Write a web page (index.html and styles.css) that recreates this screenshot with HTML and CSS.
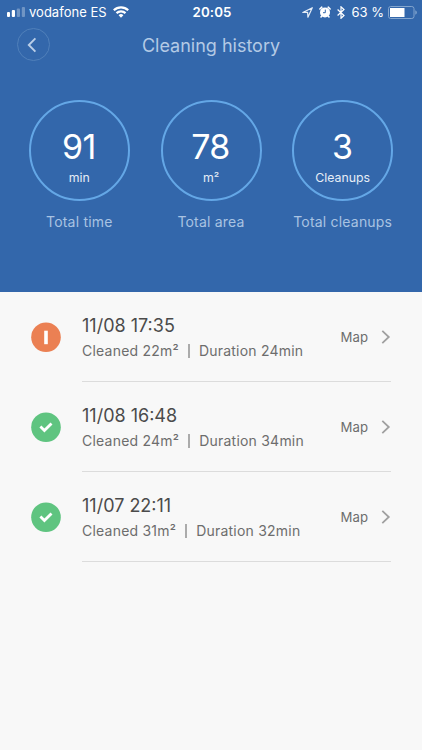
FILE: index.html
```html
<!DOCTYPE html>
<html lang="en">
<head>
<meta charset="utf-8">
<title>Cleaning history</title>
<link rel="stylesheet" href="styles.css">
</head>
<body>
<header class="hero">
  <div class="status">
    <div class="status-left">
      <svg class="signal" width="18" height="10" viewBox="0 0 18 10" fill="#fff"><rect x="0" y="5" width="3" height="5" rx="1"/><rect x="4.8" y="3" width="3.2" height="7" rx="1"/><rect x="9.8" y="1.5" width="3.2" height="8.5" rx="1" opacity=".3"/><rect x="14.8" y="0" width="3.2" height="10" rx="1" opacity=".3"/></svg>
      <span class="carrier">vodafone ES</span>
      <svg class="wifi" width="16" height="12" viewBox="0 0 16 12" fill="none" stroke="#fff" stroke-width="2.2"><path d="M.8 4.3a10.3 10.3 0 0 1 14.4 0"/><path d="M3.5 7.1a6.5 6.5 0 0 1 9 0"/><path d="M8 11.7 5.6 9.2a3.5 3.5 0 0 1 4.8 0Z" fill="#fff" stroke="none"/></svg>
    </div>
    <span class="clock">20:05</span>
    <div class="status-right">
      <svg class="locate" width="11" height="11" viewBox="0 0 11 11" fill="none" stroke="#e4ecf6" stroke-width="1.2" stroke-linejoin="round"><path d="M10.3.7.8 5.5l4.8-.2.3 4.9Z"/></svg>
      <svg class="alarm" width="12" height="12" viewBox="0 0 12 12"><circle cx="6" cy="6.4" r="5" fill="#fff"/><path d="M.9 3 2.8 1.2M11.1 3 9.2 1.2M2.8 10l-.8 1M9.2 10l.8 1" stroke="#fff" stroke-width="1.6" stroke-linecap="round"/><path d="M6.3 3.6v3.1H4" fill="none" stroke="#3367ab"/></svg>
      <svg class="bluetooth" width="8" height="13" viewBox="0 0 8 13" fill="none" stroke="#fff" stroke-width="1.2"><path d="m.6 3.5 6.4 6-3 2.8V.8l3 2.7-6.4 6"/></svg>
      <span class="percent">63 %</span>
      <svg class="battery" width="29" height="13" viewBox="0 0 29 13"><rect x=".5" y=".5" width="25.5" height="12" rx="2.2" fill="none" stroke="#83a5ce"/><rect x="2" y="2" width="14.5" height="9" fill="#fff"/><path d="M27.3 4.3c2 .8 2 3.6 0 4.4Z" fill="#83a5ce"/></svg>
    </div>
  </div>
  <nav class="nav">
    <span class="back"><svg width="10" height="16" viewBox="0 0 10 16" fill="none" stroke="#bacee7" stroke-width="1.9"><path d="M8.4 1.4 1.8 8l6.6 6.6"/></svg></span>
    <h1 class="title">Cleaning history</h1>
  </nav>
  <section class="totals">
    <div class="total"><div class="ring"><b>91</b><small>min</small></div><p>Total time</p></div>
    <div class="total"><div class="ring"><b>78</b><small>m²</small></div><p>Total area</p></div>
    <div class="total"><div class="ring"><b>3</b><small>Cleanups</small></div><p>Total cleanups</p></div>
  </section>
</header>
<main class="history">
  <article class="run">
    <svg class="badge" width="30" height="30" viewBox="0 0 30 30"><circle cx="15" cy="15.2" r="14.8" fill="#eb8053"/><rect x="13.2" y="8.7" width="3.6" height="13.5" fill="#fff"/></svg>
    <div class="body"><div class="info"><h2>11/08 17:35</h2><p>Cleaned 22m²<i></i>Duration 24min</p></div><span class="map">Map</span><svg class="chev" width="10" height="14" viewBox="0 0 10 14"><path d="m1.3.8 6.5 6.2-6.5 6.2"/></svg></div>
  </article>
  <article class="run">
    <svg class="badge" width="30" height="30" viewBox="0 0 30 30"><circle cx="15" cy="15.2" r="14.8" fill="#5fc480"/><path d="m9.4 14.6 4 3.9 7.1-7.1" fill="none" stroke="#fff" stroke-width="2.8"/></svg>
    <div class="body"><div class="info"><h2>11/08 16:48</h2><p>Cleaned 24m²<i></i>Duration 34min</p></div><span class="map">Map</span><svg class="chev" width="10" height="14" viewBox="0 0 10 14"><path d="m1.3.8 6.5 6.2-6.5 6.2"/></svg></div>
  </article>
  <article class="run">
    <svg class="badge" width="30" height="30" viewBox="0 0 30 30"><circle cx="15" cy="15.2" r="14.8" fill="#5fc480"/><path d="m9.4 14.6 4 3.9 7.1-7.1" fill="none" stroke="#fff" stroke-width="2.8"/></svg>
    <div class="body"><div class="info"><h2>11/07 22:11</h2><p>Cleaned 31m²<i></i>Duration 32min</p></div><span class="map">Map</span><svg class="chev" width="10" height="14" viewBox="0 0 10 14"><path d="m1.3.8 6.5 6.2-6.5 6.2"/></svg></div>
  </article>
</main>
</body>
</html>
```
FILE: styles.css
```css
* { box-sizing: border-box; margin: 0; padding: 0; }
body {
  width: 422px;
  height: 750px;
  overflow: hidden;
  background: #f8f8f8;
  font-family: Inter, "Liberation Sans", sans-serif;
}
svg { display: block; flex: none; }
.hero { height: 292px; background: #3367ab; color: #fff; }

.status {
  display: grid;
  grid-template-columns: 1fr auto 1fr;
  align-items: center;
  height: 24px;
  padding: 0 5px 0 7px;
  font-size: 13px;
  line-height: 24px;
  white-space: nowrap;
}
.status-left, .status-right { display: flex; align-items: center; }
.status-right { justify-content: flex-end; }
.carrier { margin: 0 6px 0 4px; letter-spacing: .02px; }
.clock { font-size: 13.3px; font-weight: 600; letter-spacing: .1px; }
.alarm { margin-left: 6px; }
.bluetooth { margin-left: 6px; }
.percent { margin: 0 4px 0 6px; letter-spacing: 0; }

.nav {
  display: grid;
  grid-template-columns: 33px 1fr 33px;
  align-items: center;
  height: 42px;
  padding: 0 17px;
}
.back {
  display: flex;
  align-items: center;
  justify-content: center;
  width: 33px;
  height: 33px;
  margin-bottom: 1px;
  padding-right: 3px;
  border: 1px solid #5080ba;
  border-radius: 50%;
}
.title {
  padding-top: 1px;
  color: #b4cae5;
  font-size: 18px;
  font-weight: 400;
  line-height: 24px;
  text-align: center;
}

.totals {
  display: grid;
  grid-template-columns: repeat(3, 131.7px);
  justify-content: center;
  padding-top: 34px;
}
.total { display: flex; flex-direction: column; align-items: center; }
.ring {
  display: flex;
  flex-direction: column;
  align-items: center;
  width: 101px;
  height: 101px;
  padding-top: 25px;
  border: 2.5px solid #64a7e6;
  border-radius: 50%;
}
.ring b { margin-left: -1px; font-size: 34px; font-weight: 400; letter-spacing: -.6px; line-height: 40px; }
.ring small { font-size: 12.3px; line-height: 16px; margin-top: 3px; color: #e6edf6; }
.total p {
  margin-top: 11px;
  color: #a9c3e2;
  font-size: 14px;
  letter-spacing: .2px;
  line-height: 20px;
  white-space: nowrap;
}

.run { display: flex; height: 90px; padding: 0 31px; }
.badge { margin: 30px 21px 0 0; }
.body {
  display: flex;
  flex: 1;
  border-bottom: 1px solid #dcdcdc;
  color: #6d6d6d;
}
.info { flex: 1; padding-top: 22px; white-space: nowrap; }
.info h2 { color: #4b4b4b; font-size: 18px; font-weight: 400; line-height: 24px; }
.info p { display: flex; align-items: center; font-size: 14px; letter-spacing: .22px; line-height: 20px; margin-top: 3px; }
.info i { width: 2px; height: 14px; margin: 0 9px; background: #ababab; }
.map { margin: 35px 13px 0 0; font-size: 13.2px; line-height: 20px; }
.chev { margin-top: 38px; fill: none; stroke: #a0a0a0; stroke-width: 1.8; }
```
